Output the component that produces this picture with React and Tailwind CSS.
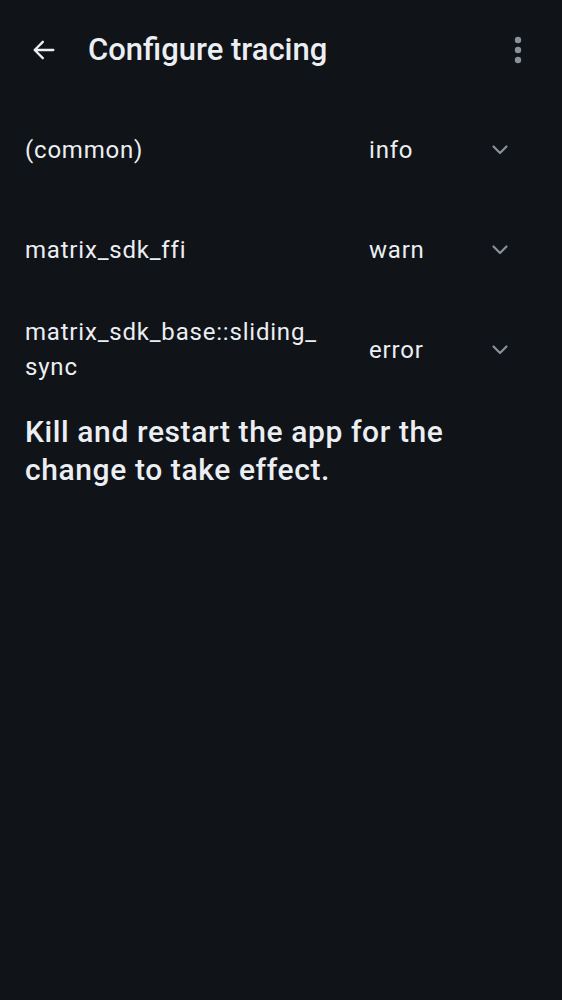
import React from "react";

const rows = [
  { name: "(common)", level: "info" },
  { name: "matrix_sdk_ffi", level: "warn" },
  { name: "matrix_sdk_base::sliding_\u200Bsync", level: "error" },
];

const Chevron = () => (
  <svg width="24" height="24" viewBox="0 0 24 24" fill="none">
    <path d="M5.5 8.5l6.5 6.5 6.5-6.5" stroke="#8a919b" strokeWidth="2.2" strokeLinecap="round" strokeLinejoin="round" />
  </svg>
);

export default function App() {
  return (
    <div className="min-h-[1000px] w-full bg-[#101317] text-[#ebeef2]" style={{ fontFamily: "Roboto, sans-serif" }}>
      {/* top bar */}
      <div className="flex h-[100px] items-center px-[20px]">
        <button className="flex h-[48px] w-[48px] items-center justify-center">
          <svg width="28" height="28" viewBox="0 0 24 24" fill="none">
            <path d="M20 12H5M11 5l-7 7 7 7" stroke="#ebeef2" strokeWidth="2" strokeLinecap="round" strokeLinejoin="round" />
          </svg>
        </button>
        <h1 className="ml-[20px] flex-1 text-[31px] font-medium">Configure tracing</h1>
        <button className="flex h-[48px] w-[48px] items-center justify-center">
          <svg width="8" height="28" viewBox="0 0 8 28">
            <circle cx="4" cy="4" r="3.2" fill="#8a919b" />
            <circle cx="4" cy="14" r="3.2" fill="#8a919b" />
            <circle cx="4" cy="24" r="3.2" fill="#8a919b" />
          </svg>
        </button>
      </div>

      {/* rows */}
      {rows.map((row) => (
        <div key={row.name} className="flex h-[100px] items-center pl-[25px] pr-[50px] text-[24px] tracking-[0.8px]">
          <div className="w-[320px] leading-[35px]">{row.name}</div>
          <div className="ml-[24px] flex-1">{row.level}</div>
          <Chevron />
        </div>
      ))}

      <p className="px-[25px] pt-[13px] text-[30px] font-medium leading-[38px] tracking-[0.6px]">
        Kill and restart the app for the change to take effect.
      </p>
    </div>
  );
}
